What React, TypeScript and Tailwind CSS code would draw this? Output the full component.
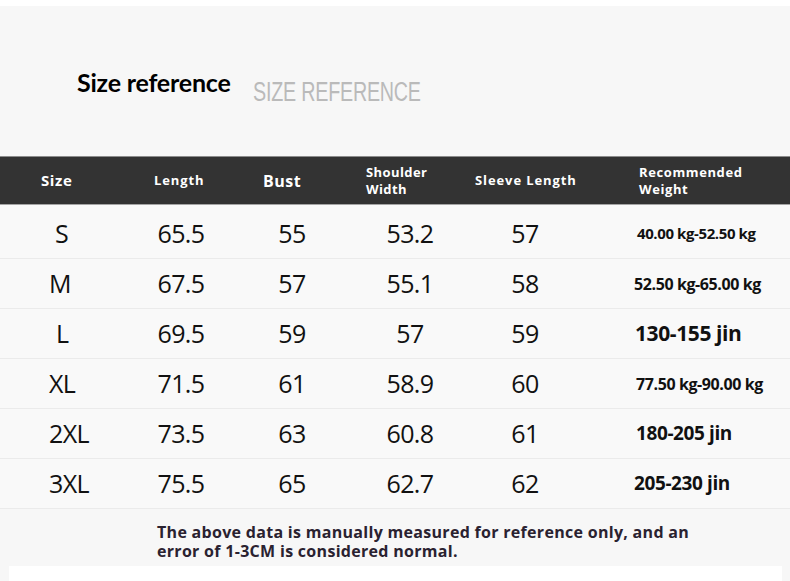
const rows = [
  { size: 'S', indent: 'pl-[55px]', length: '65.5', bust: '55', shoulder: '53.2', sleeve: '57', weight: '40.00 kg-52.50 kg', wClass: 'text-[15px] ml-[2px]' },
  { size: 'M', indent: 'pl-[49px]', length: '67.5', bust: '57', shoulder: '55.1', sleeve: '58', weight: '52.50 kg-65.00 kg', wClass: 'text-[16px] -ml-[1px]' },
  { size: 'L', indent: 'pl-[56px]', length: '69.5', bust: '59', shoulder: '57', sleeve: '59', weight: '130-155 jin', wClass: 'text-[21px]' },
  { size: 'XL', indent: 'pl-[49px]', length: '71.5', bust: '61', shoulder: '58.9', sleeve: '60', weight: '77.50 kg-90.00 kg', wClass: 'text-[16px] ml-[1px]' },
  { size: '2XL', indent: 'pl-[49px]', length: '73.5', bust: '63', shoulder: '60.8', sleeve: '61', weight: '180-205 jin', wClass: 'text-[19px] ml-[1px]' },
  { size: '3XL', indent: 'pl-[49px]', length: '75.5', bust: '65', shoulder: '62.7', sleeve: '62', weight: '205-230 jin', wClass: 'text-[19px] -ml-[1px]' },
];

const cols = 'grid grid-cols-[124px_114px_108px_128px_102px_1fr]';
const sans = "font-['Open_Sans',sans-serif]";

export default function App() {
  return (
    <div className={`h-[581px] w-[790px] overflow-hidden bg-white ${sans}`}>
      <div className="h-[6px] bg-white" />

      <section className="flex h-[150px] items-start bg-[#f7f7f7] pl-[77px] pt-[61px]">
        <h1 className="font-['Lato',sans-serif] text-[25px] font-bold leading-[30px] tracking-[-0.2px] text-black">
          Size reference
        </h1>
        <span className="ml-[22px] mt-[10px] w-[166px] origin-left scale-x-[0.73] whitespace-nowrap font-['Liberation_Sans',sans-serif] text-[27px] leading-[30px] tracking-[-0.3px] text-[#bababa]">
          SIZE REFERENCE
        </span>
      </section>

      <div className={`${cols} h-[49px] items-center border-t border-[#8c8c8c] border-b border-b-[#a5a5a5] bg-[#333333] font-bold text-white`}>
        <div className="pl-[41px] text-[15px] tracking-[0.6px]">Size</div>
        <div className="pl-[30px] text-[13px] tracking-[0.9px]">Length</div>
        <div className="pl-[25px] text-[16px] tracking-[0.5px]">Bust</div>
        <div className="pl-[20px] text-[13px] leading-[17px] tracking-[0.4px]">
          Shoulder
          <br />
          Width
        </div>
        <div className="pl-[1px] text-[13px] tracking-[0.9px] whitespace-nowrap">Sleeve Length</div>
        <div className="pl-[63px] text-[13px] leading-[17px] tracking-[0.6px]">
          Recommended
          <br />
          Weight
        </div>
      </div>

      <div className="bg-[#f9f9f9] pt-[4px]">
        {rows.map((r) => (
          <div
            key={r.size}
            className={`${cols} h-[50px] items-center border-b border-[#ebebeb] text-[25px] tracking-[-0.6px] text-[#111111]`}
          >
            <div className={r.indent}>{r.size}</div>
            <div className="text-center">{r.length}</div>
            <div className="text-center">{r.bust}</div>
            <div className="text-center">{r.shoulder}</div>
            <div className="text-center">{r.sleeve}</div>
            <div className={`pl-[59px] font-bold tracking-[-0.4px] ${r.wClass}`}>{r.weight}</div>
          </div>
        ))}
      </div>

      <div className="h-[57px] bg-[#f7f7f7] pl-[157px] pt-[14px] text-[16px] font-bold tracking-[0.3px] text-[#2a2230]">
        <p className="leading-[19px]">The above data is manually measured for reference only, and an</p>
        <p className="leading-[19px]">error of 1-3CM is considered normal.</p>
      </div>

      <div className="flex h-[20px] bg-[#f7f7f7]">
        <div className="ml-[9px] w-[773px] bg-white" />
      </div>
    </div>
  );
}
